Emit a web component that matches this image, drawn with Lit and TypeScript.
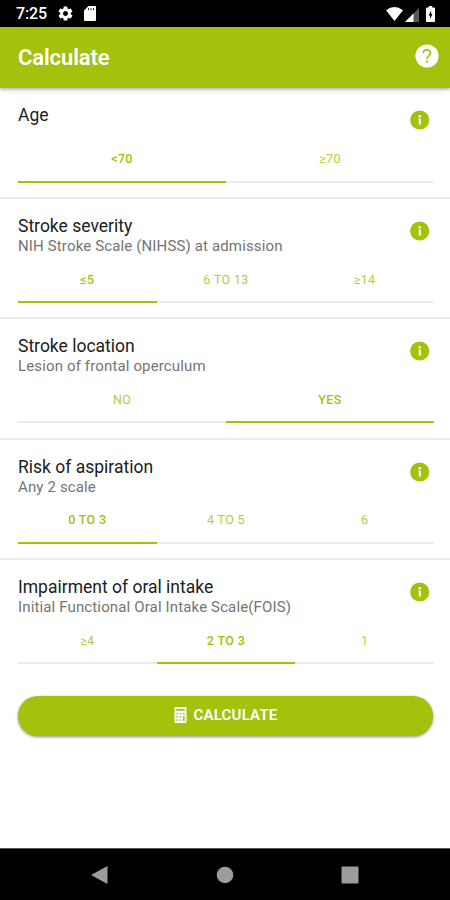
import { LitElement, html, css, svg, nothing } from "lit";
import { customElement, state } from "lit/decorators.js";
import { classMap } from "lit/directives/class-map.js";

interface Question {
  title: string;
  hint?: string;
  options: string[];
  selected: number;
}

const icon = (cls: string, box: string, body: unknown) =>
  html`<svg class=${cls} viewBox=${box} aria-hidden="true">${body}</svg>`;

const gear = svg`<path fill-rule="evenodd" d="M19.43 12.98c.04-.32.07-.64.07-.98s-.03-.66-.07-.98l2.11-1.65c.19-.15.24-.42.12-.64l-2-3.46c-.12-.22-.39-.3-.61-.22l-2.49 1c-.52-.4-1.08-.73-1.69-.98l-.38-2.65A.488.488 0 0 0 14 2h-4c-.25 0-.46.18-.49.42l-.38 2.65c-.61.25-1.17.59-1.69.98l-2.49-1c-.23-.09-.49 0-.61.22l-2 3.46c-.13.22-.07.49.12.64l2.11 1.65c-.04.32-.07.65-.07.98s.03.66.07.98l-2.11 1.65c-.19.15-.24.42-.12.64l2 3.46c.12.22.39.3.61.22l2.49-1c.52.4 1.08.73 1.69.98l.38 2.65c.03.24.24.42.49.42h4c.25 0 .46-.18.49-.42l.38-2.65c.61-.25 1.17-.59 1.69-.98l2.49 1c.23.09.49 0 .61-.22l2-3.46c.12-.22.07-.49-.12-.64l-2.11-1.65zM12 15.5c-1.93 0-3.5-1.57-3.5-3.5s1.57-3.5 3.5-3.5 3.5 1.57 3.5 3.5-1.57 3.5-3.5 3.5z"/>`;
const info = svg`<circle cx="9.700" cy="10" r="9.600"/><g fill="#fff"><circle cx="9.700" cy="6.200" r="1.300"/><path d="M8.400 8.400H10.800V14.600H8.800V9.300H8.400Z"/></g>`;
const help = svg`<circle cx="12" cy="12" r="11.600"/><path d="M8.200 9.300C8.200 4.600 15.600 4.700 15.600 9.100C15.600 11.600 11.900 11.800 11.900 15" fill="none" stroke="#a4c10c" stroke-width="1.700"/><rect x="11" y="16.500" width="1.900" height="1.900" fill="#a4c10c"/>`;

@customElement("app-root")
export class AppRoot extends LitElement {
  @state() private questions: Question[] = [
    { title: "Age", options: ["<70", "≥70"], selected: 0 },
    { title: "Stroke severity", hint: "NIH Stroke Scale (NIHSS) at admission", options: ["≤5", "6 TO 13", "≥14"], selected: 0 },
    { title: "Stroke location", hint: "Lesion of frontal operculum", options: ["NO", "YES"], selected: 1 },
    { title: "Risk of aspiration", hint: "Any 2 scale", options: ["0 TO 3", "4 TO 5", "6"], selected: 0 },
    { title: "Impairment of oral intake", hint: "Initial Functional Oral Intake Scale(FOIS)", options: ["≥4", "2 TO 3", "1"], selected: 1 },
  ];

  static styles = css`
    :host {
      display: flex;
      flex-direction: column;
      height: 900px;
      background: #fff;
      font-family: Roboto, "Liberation Sans", sans-serif;
      color: #202020;
      overflow: hidden;
    }
    * { box-sizing: border-box; }
    svg { display: block; flex: none; fill: currentColor; }
    .status {
      flex: none;
      height: 26.5px;
      padding: 1px 15px 0 16px;
      display: flex;
      align-items: center;
      background: #000;
      color: #fff;
      font-size: 16px;
      font-weight: 500;
    }
    .clock { width: 41px; letter-spacing: -0.1px; }
    .gear { width: 17px; height: 17px; }
    .sd { width: 12px; height: 15px; margin-left: 10px; }
    .grow { flex: 1; }
    .wifi { width: 17px; height: 14px; }
    .signal { width: 14px; height: 14px; margin: 2px 0 0 2px; }
    .battery { width: 9px; height: 16px; margin-left: 7px; }
    .bar {
      flex: none;
      height: 61px;
      padding: 0 11px 3px 18px;
      display: flex;
      align-items: center;
      justify-content: space-between;
      background: #a4c10c;
      color: #fff;
      box-shadow: 0 1px 4px rgba(0, 0, 0, 0.4);
      z-index: 1;
    }
    .heading { margin: 3px 0 0; font-size: 22px; font-weight: 600; letter-spacing: -0.1px; }
    .help { width: 24px; height: 24px; }
    .question {
      flex: none;
      height: 120.35px;
      padding: 16px 16px 0 18px;
      border-bottom: 2px solid #ececec;
      display: flex;
      flex-direction: column;
    }
    .question:first-child { height: 111.5px; }
    .question:last-of-type { border-bottom-color: transparent; }
    .top { display: flex; justify-content: space-between; height: 44px; }
    .question:first-child .top { height: 35px; }
    .title { font-size: 17.5px; line-height: 22px; white-space: nowrap; }
    .hint { font-size: 15px; line-height: 19px; letter-spacing: 0.14px; color: #747474; white-space: nowrap; }
    .info { width: 20px; height: 20px; margin: 6px 4px 0 0; color: #a4c10c; }
    .options { display: flex; height: 44px; }
    .option {
      flex: 1;
      border: 0;
      border-bottom: 2px solid #ececec;
      background: none;
      padding: 0 0 2px;
      font: 400 12.5px Roboto, "Liberation Sans", sans-serif;
      letter-spacing: 0.35px;
      color: #b4cc42;
    }
    .option.on { border-bottom-color: #a4c10c; color: #a4c10c; font-weight: 500; }
    .submit {
      flex: none;
      height: 40px;
      margin: 16px 17px 0 18px;
      border: 0;
      border-radius: 20px;
      display: flex;
      align-items: center;
      justify-content: center;
      gap: 7px;
      background: #a4c10c;
      color: #fff;
      font: 600 15px Roboto, "Liberation Sans", sans-serif;
      letter-spacing: 0.2px;
      box-shadow: 0 1px 3px rgba(0, 0, 0, 0.45);
      padding: 0 0 2px;
    }
    .calc { width: 13px; height: 16px; }
    .nav {
      flex: none;
      height: 52px;
      margin-top: auto;
      background: #000;
      border-top: 1px solid #555;
      color: #9c9c9c;
      display: flex;
      align-items: center;
      justify-content: space-between;
      padding: 0 91px;
    }
    .key { width: 18px; height: 18px; }
  `;

  private choose(q: number, o: number) {
    this.questions = this.questions.map((item, i) => (i === q ? { ...item, selected: o } : item));
  }

  render() {
    return html`
      <div class="status">
        <span class="clock">7:25</span>
        ${icon("gear", "0 0 24 24", gear)}
        ${icon("sd", "0 0 12 15", svg`<path fill-rule="evenodd" d="M4.500 0H11Q12 0 12 1V14Q12 15 11 15H1Q0 15 0 14V4.500ZM4.200 2V4.200H5V2ZM6.600 2V4.200H7.400V2ZM9 2V4.200H9.800V2Z"/>`)}
        <span class="grow"></span>
        ${icon("wifi", "0 0 17 14", svg`<path d="M0 3.200Q8.500-3 17 3.200L8.500 14Z"/>`)}
        ${icon("signal", "0 0 14 14", svg`<path opacity=".35" d="M14 0V14H0Z"/><path d="M8.500 5.500V14H0Z"/>`)}
        ${icon("battery", "0 0 9 16", svg`<path fill-rule="evenodd" d="M2.800 0H6.200V1.600H8Q9 1.600 9 2.600V15Q9 16 8 16H1Q0 16 0 15V2.600Q0 1.600 1 1.600H2.800ZM5.200 4.500L2.500 9.500H4V13L6.500 8H5.200Z"/>`)}
      </div>
      <header class="bar">
        <h1 class="heading">Calculate</h1>
        ${icon("help", "0 0 24 24", help)}
      </header>
      <main>
        ${this.questions.map(
          (q, i) => html`<section class="question">
            <div class="top">
              <div>
                <div class="title">${q.title}</div>
                ${q.hint ? html`<div class="hint">${q.hint}</div>` : nothing}
              </div>
              ${icon("info", "0 0 20 20", info)}
            </div>
            <div class="options">
              ${q.options.map(
                (o, j) => html`<button class=${classMap({ option: true, on: j === q.selected })} @click=${() => this.choose(i, j)}>${o}</button>`
              )}
            </div>
          </section>`
        )}
      </main>
      <button class="submit">
        ${icon("calc", "0 0 12 16", svg`<path fill-rule="evenodd" d="M1 0H11Q12 0 12 1V15Q12 16 11 16H1Q0 16 0 15V1Q0 0 1 0ZM1.800 2V3.800H10.200V2ZM1.800 6V7.200H3.500V6ZM5.200 6V7.200H6.900V6ZM8.500 6V7.200H10.200V6ZM1.800 9.300V10.500H3.500V9.300ZM5.200 9.300V10.500H6.900V9.300ZM8.500 9.300V14H10.200V9.300ZM1.800 12.600V13.800H3.500V12.600ZM5.200 12.600V13.800H6.900V12.600Z"/>`)}
        <span>CALCULATE</span>
      </button>
      <nav class="nav">
        ${icon("key", "0 0 18 18", svg`<path d="M16.500 0V18L0 9Z"/>`)}
        ${icon("key", "0 0 18 18", svg`<circle cx="9" cy="9" r="8.300"/>`)}
        ${icon("key", "0 0 18 18", svg`<rect x=".5" y=".5" width="17" height="17" rx="1"/>`)}
      </nav>
    `;
  }
}
